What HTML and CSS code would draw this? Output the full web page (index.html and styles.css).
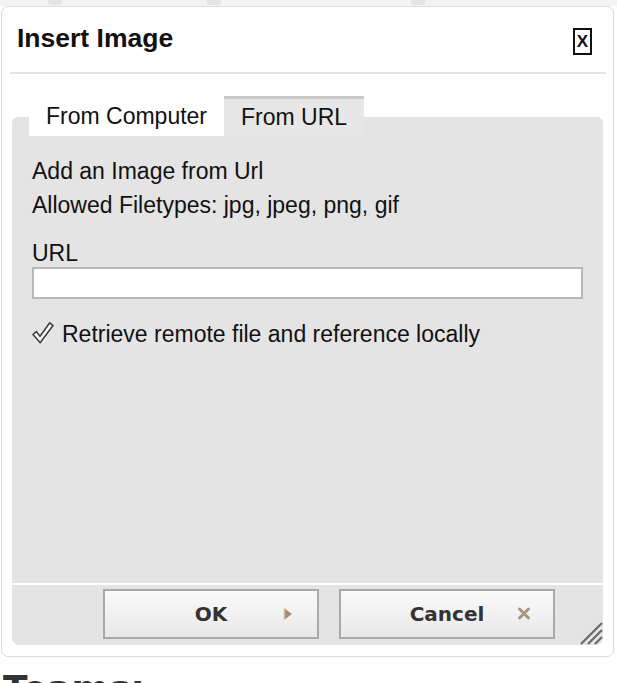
FILE: index.html
```html
<!DOCTYPE html>
<html>
<head>
<meta charset="utf-8">
<link rel="stylesheet" href="styles.css">
</head>
<body>
<div class="topstrip">
  <span class="bump b1"></span>
  <span class="bump b2"></span>
  <span class="bump b3"></span>
</div>
<div class="dialog">
  <div class="header">
    <div class="title">Insert Image</div>
    <div class="close">X</div>
  </div>
  <div class="sep"></div>
  <div class="tabs">
    <div class="tab tab-white">From Computer</div>
    <div class="tab tab-active">From URL</div>
  </div>
  <div class="panel">
    <div class="line">Add an Image from Url</div>
    <div class="line">Allowed Filetypes: jpg, jpeg, png, gif</div>
    <div class="label">URL</div>
    <div class="input"></div>
    <div class="check-row">
      <svg class="check" width="22" height="24" viewBox="0 0 22 24">
        <circle cx="8.5" cy="16" r="6.5" fill="#efefef"/>
        <path d="M1 13.5 L4.3 10.6 L8 15.3 L17.8 1.8 L21 4.6 L8.2 21.8 Z" fill="#fbfbfb" stroke="#3f3f3f" stroke-width="1.6" stroke-linejoin="round"/>
      </svg>
      <span>Retrieve remote file and reference locally</span>
    </div>
  </div>
  <div class="gap"></div>
  <div class="bar">
    <div class="btn">
      <span class="btn-text">OK</span>
      <svg class="btn-icon ok-icon" width="10" height="12" viewBox="0 0 10 12">
        <path d="M1.5 0.5 L9 6 L1.5 11.5 Z" fill="#a48c74"/>
        <path d="M1.5 0.5 L1.5 11.5" stroke="#c9b8a6" stroke-width="1.5"/>
      </svg>
    </div>
    <div class="btn">
      <span class="btn-text">Cancel</span>
      <svg class="btn-icon x-icon" width="14" height="13" viewBox="0 0 14 13">
        <path d="M2.5 2 L11.5 11 M11.5 2 L2.5 11" stroke="#a8977f" stroke-width="3" stroke-linecap="round"/>
      </svg>
    </div>
    <svg class="grip" width="24" height="23" viewBox="0 0 24 23">
      <path d="M2 22 L23 1 M9 22 L23 8 M16 22 L23 15" stroke="#6a6a6a" stroke-width="2.2"/>
    </svg>
  </div>
</div>
<div class="below">Teams:</div>
</body>
</html>
```
FILE: styles.css
```css
html, body {
  margin: 0;
  padding: 0;
  background: #ffffff;
}
body {
  width: 617px;
  height: 683px;
  overflow: hidden;
  font-family: "Liberation Sans", Arial, sans-serif;
  color: #111;
}
.topstrip {
  height: 6px;
  background: #f3f3f3;
  display: flex;
  align-items: flex-start;
}
.bump {
  display: block;
  height: 5px;
  width: 14px;
  background: #e4e4e4;
  border-radius: 0 0 3px 3px;
}
.b1 { margin-left: 48px; }
.b2 { margin-left: 145px; }
.b3 { margin-left: 190px; }
.dialog {
  box-sizing: border-box;
  margin-left: 1px;
  width: 613px;
  height: 651px;
  border: 1px solid #dcdcdc;
  border-radius: 7px;
  background: #fff;
  display: flex;
  flex-direction: column;
  position: relative;
}
.header {
  display: flex;
  justify-content: space-between;
  align-items: flex-start;
  padding: 16px 21px 17px 15px;
}
.title {
  font-weight: bold;
  font-size: 26.5px;
  line-height: 31px;
  color: #111;
}
.close {
  box-sizing: border-box;
  margin-top: 5px;
  width: 19px;
  height: 27px;
  border: 2px solid #111;
  font-weight: bold;
  font-size: 17px;
  line-height: 23px;
  text-align: center;
  color: #111;
}
.sep {
  height: 2px;
  margin: 0 7px 0 8px;
  background: #e3e3e3;
}
.tabs {
  display: flex;
  margin: 22px 0 -19px 27px;
  position: relative;
  z-index: 1;
}
.tab {
  box-sizing: border-box;
  height: 40px;
  padding: 0 17px;
  font-size: 23px;
  line-height: 40px;
  color: #111;
  white-space: nowrap;
}
.tab-white {
  background: #fff;
}
.tab-active {
  background: #e7e7e7;
  border-top: 3px solid #c9c9c9;
  line-height: 37px;
}
.panel {
  flex: 1;
  margin: 0 10px;
  background: #e4e4e4;
  border-radius: 6px 6px 0 0;
  padding: 37px 18px 0 20px;
  font-size: 23px;
}
.line {
  line-height: 34px;
}
.label {
  margin-top: 17px;
  line-height: 28px;
}
.input {
  box-sizing: border-box;
  height: 32px;
  width: 551px;
  background: #fff;
  border: 2px solid #b8b8b8;
}
.check-row {
  margin-top: 18px;
  line-height: 34px;
  display: flex;
  align-items: center;
}
.check {
  margin-right: 8px;
  margin-top: -3px;
}
.gap {
  height: 2px;
}
.bar {
  height: 60px;
  margin: 0 10px 11px;
  background: #e4e4e4;
  border-radius: 0 0 7px 7px;
  display: flex;
  justify-content: flex-end;
  align-items: flex-start;
  gap: 20px;
  padding: 4px 48px 0 0;
  box-sizing: border-box;
  position: relative;
}
.btn {
  box-sizing: border-box;
  width: 216px;
  height: 50px;
  border: 2px solid #a9a9a9;
  background: linear-gradient(#fafafa, #e8e8e8);
  display: flex;
  align-items: center;
  justify-content: center;
  position: relative;
}
.btn-text {
  font-family: "DejaVu Sans", Verdana, sans-serif;
  font-weight: bold;
  font-size: 20px;
  color: #333;
}
.btn-icon {
  position: absolute;
  top: 50%;
}
.ok-icon {
  right: 24px;
  margin-top: -6px;
}
.x-icon {
  right: 22px;
  margin-top: -7px;
}
.grip {
  position: absolute;
  right: 0;
  bottom: 0;
}
.below {
  margin-top: 12px;
  padding-left: 3px;
  font-family: "DejaVu Sans", Verdana, sans-serif;
  font-weight: bold;
  font-size: 36px;
  line-height: 40px;
  color: #333;
}
```
